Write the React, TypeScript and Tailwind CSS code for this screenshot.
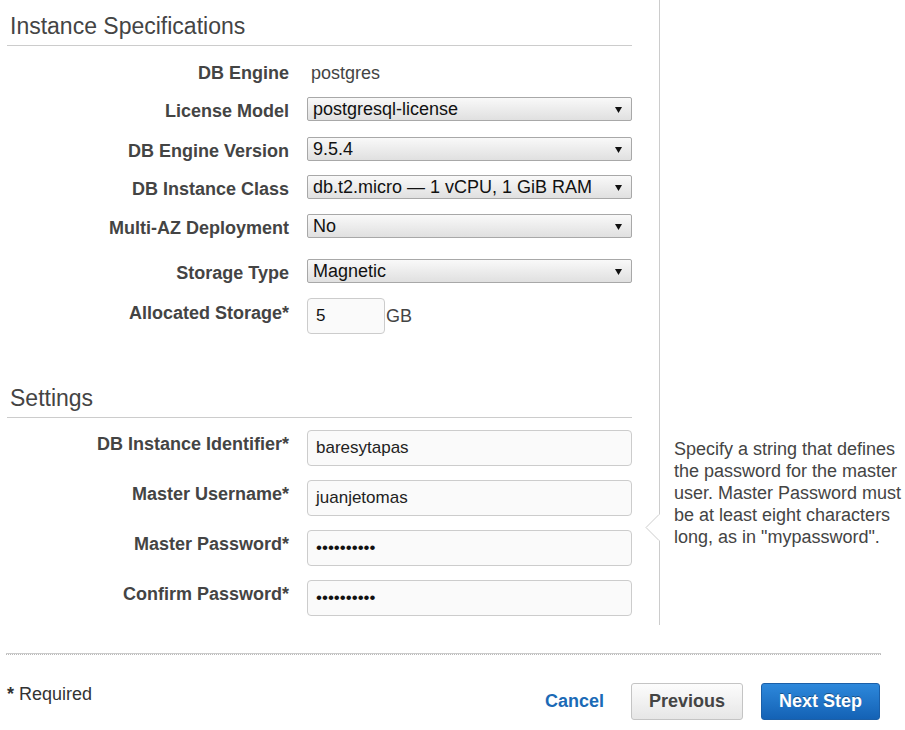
import React from "react";

const font = { fontFamily: '"Liberation Sans", Arial, sans-serif' };

const labelCls =
  "w-[289px] shrink-0 text-right font-bold text-[18px] text-[#444]";

function Arrow() {
  return (
    <svg width="7" height="7" viewBox="0 0 7 7" className="shrink-0">
      <polygon points="0,1 7,1 3.5,7" fill="#111" />
    </svg>
  );
}

function SelectBox({ value }: { value: string }) {
  return (
    <div className="flex h-[24px] w-[325px] items-center justify-between rounded-[2px] border border-[#a8a8a8] bg-gradient-to-b from-[#f9f9f9] to-[#e0e0e0] pl-[5px] pr-[9px] text-[18px] leading-[22px] text-[#111]">
      <span>{value}</span>
      <Arrow />
    </div>
  );
}

function SelectRow({ label, value, mt }: { label: string; value: string; mt: string }) {
  return (
    <div className={`flex h-[24px] items-start gap-[18px] ${mt}`}>
      <div className={`${labelCls} mt-[4px] leading-[20px]`}>{label}</div>
      <SelectBox value={value} />
    </div>
  );
}

function InputRow({
  label,
  value,
  password,
  mt,
}: {
  label: string;
  value: string;
  password?: boolean;
  mt: string;
}) {
  return (
    <div className={`flex items-start gap-[18px] ${mt}`}>
      <div className={`${labelCls} mt-[2px] leading-[24px]`}>{label}</div>
      <div className="flex h-[36px] w-[325px] items-center rounded-[4px] border border-[#cccccc] bg-[#fafafa] pl-[8px] text-[17px] text-[#222]">
        {password ? <span className="text-[17px] text-[#111]">{value}</span> : value}
      </div>
    </div>
  );
}

function Heading({ children }: { children: React.ReactNode }) {
  return (
    <div className="ml-[7px] w-[625px] border-b border-[#cccccc] pb-[5px] pl-[3px] pt-[12px] text-[23px] leading-[28px] text-[#444]">
      {children}
    </div>
  );
}

export default function App() {
  return (
    <div className="w-[905px] bg-white pb-[10px]" style={font}>
      {/* Instance Specifications */}
      <div className="flex">
        <div className="w-[660px] shrink-0 border-r border-[#cccccc] pb-[38px]">
          <Heading>Instance Specifications</Heading>
          <div className="mt-[15px] flex h-[24px] items-center gap-[18px]">
            <div className={`${labelCls} leading-[24px]`}>DB Engine</div>
            <div className="pl-[4px] text-[18px] text-[#444]">postgres</div>
          </div>
          <SelectRow label="License Model" value="postgresql-license" mt="mt-[12px]" />
          <SelectRow label="DB Engine Version" value="9.5.4" mt="mt-[16px]" />
          <SelectRow label="DB Instance Class" value="db.t2.micro — 1 vCPU, 1 GiB RAM" mt="mt-[14px]" />
          <SelectRow label="Multi-AZ Deployment" value="No" mt="mt-[15px]" />
          <SelectRow label="Storage Type" value="Magnetic" mt="mt-[21px]" />
          <div className="mt-[15px] flex items-start gap-[18px]">
            <div className={`${labelCls} mt-[3px] leading-[24px]`}>Allocated Storage*</div>
            <div className="flex items-center">
              <div className="flex h-[36px] w-[78px] items-center rounded-[4px] border border-[#cccccc] bg-[#fafafa] pl-[8px] text-[17px] text-[#111]">
                5
              </div>
              <span className="ml-[1px] text-[18px] text-[#444]">GB</span>
            </div>
          </div>
        </div>
        <div className="flex-1" />
      </div>

      {/* Settings */}
      <div className="flex">
        <div className="w-[660px] shrink-0 border-r border-[#cccccc] pb-[9px]">
          <Heading>Settings</Heading>
          <InputRow label="DB Instance Identifier*" value="baresytapas" mt="mt-[12px]" />
          <InputRow label="Master Username*" value="juanjetomas" mt="mt-[14px]" />
          <InputRow label="Master Password*" value="••••••••••" password mt="mt-[14px]" />
          <InputRow label="Confirm Password*" value="••••••••••" password mt="mt-[14px]" />
        </div>
        <div className="relative flex-1 pl-[14px] pt-[66px]">
          <svg
            width="15"
            height="27"
            viewBox="0 0 15 27"
            className="absolute left-[-15px] top-[142px]"
          >
            <polygon points="15,0 1,13.5 15,27" fill="#ffffff" />
            <polyline points="14,0.5 1,13.5 14,26.5" fill="none" stroke="#cccccc" strokeWidth="1" />
          </svg>
          <p className="w-[231px] text-[18px] leading-[22px] text-[#444]">
            Specify a string that defines the password for the master user. Master Password must be at
            least eight characters long, as in "mypassword".
          </p>
        </div>
      </div>

      {/* Footer */}
      <div className="ml-[6px] mt-[28px] w-[875px] border-b border-t border-b-[#b9b9b9] border-t-[#cbcbcb] border-dotted [border-top-style:solid]" />
      <div className="ml-[7px] mt-[27px] flex w-[873px] items-start justify-between">
        <div className="text-[18px] leading-[24px] text-[#333]">
          <span className="font-bold">*</span> Required
        </div>
        <div className="mt-[1px] flex items-center">
          <button className="text-[18px] font-bold text-[#1b6ab6]">Cancel</button>
          <button className="ml-[27px] h-[37px] rounded-[3px] border border-[#c4c4c4] bg-gradient-to-b from-[#fcfcfc] to-[#e6e6e6] px-[17px] text-[18px] font-bold text-[#444]">
            Previous
          </button>
          <button className="ml-[18px] h-[37px] rounded-[3px] border border-[#1b5fa8] bg-gradient-to-b from-[#2d88db] to-[#1462b5] px-[17px] text-[18px] font-bold text-white [text-shadow:0_-1px_0_rgba(0,0,0,0.35)]">
            Next Step
          </button>
        </div>
      </div>
    </div>
  );
}
